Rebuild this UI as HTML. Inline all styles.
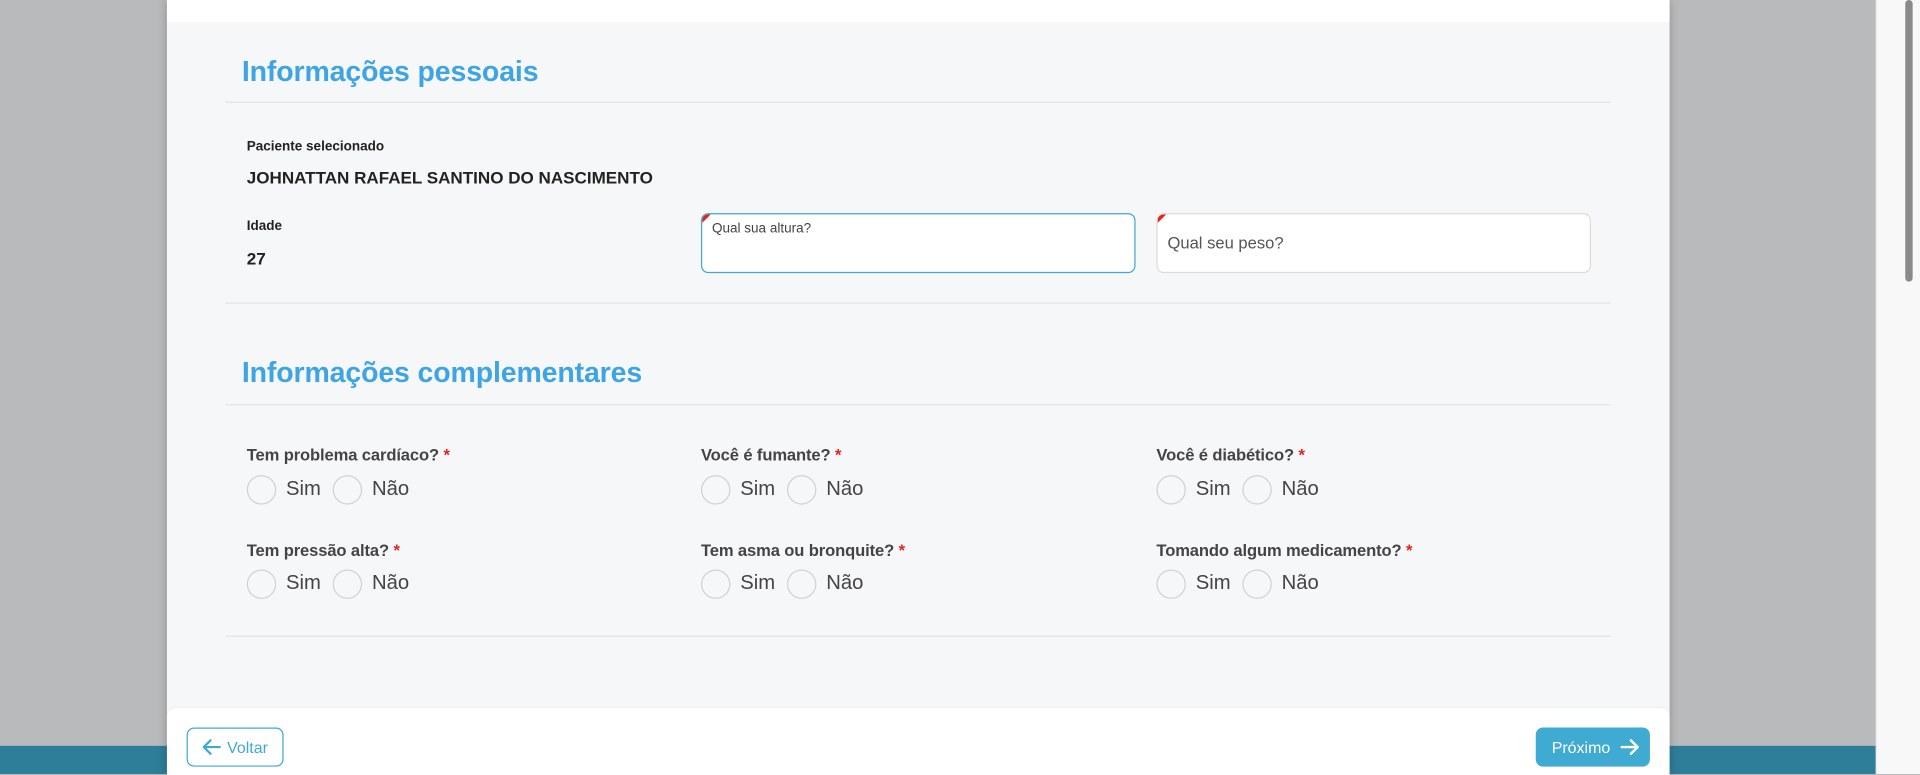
<!DOCTYPE html>
<html><head><meta charset="utf-8"><style>
html,body{margin:0;padding:0;width:1920px;height:774px;overflow:hidden;background:#b9babc;font-family:"Liberation Sans",sans-serif}
#w{position:absolute;left:0;top:0;width:1564px;height:632px;transform:scale(1.22762,1.2247);transform-origin:0 0}
.a{position:absolute}
.teal{left:0;top:609px;width:1528px;height:23px;background:#2e7d99}
.sb{left:1528px;top:0;width:36px;height:632px;background:#f8f8f8;border-left:1px solid #ececec}
.th{left:1552px;top:0;width:6px;height:230px;background:#8a8a8a;border-radius:3px}
.modal{left:136px;top:0;width:1224px;height:632px;background:#f6f7f9;box-shadow:0 0 8px rgba(0,0,0,.25)}
.top{left:136px;top:0;width:1224px;height:18px;background:#fff}
.foot{left:136px;top:577px;width:1224px;height:55px;background:#fff;border-radius:8px 8px 0 0;border-top:1px solid #eceef0}
.h{color:#3fa4e4;font-weight:bold;font-size:23.2px;letter-spacing:-.1px}
.hr{left:184px;width:1128px;height:1px;background:#e1e3e6}
.sm{font-size:11px;font-weight:bold;color:#222}
.big{font-size:13.9px;font-weight:bold;color:#222}
.inp{width:352px;height:47px;background:#fff;border-radius:6px;overflow:hidden}
.inp:before{content:"";position:absolute;left:0;top:0;border-top:7px solid #e8221b;border-right:7px solid transparent}
.q{font-size:13.5px;color:#444;font-weight:bold;letter-spacing:-.1px}
.q b{color:#e8221b}
.r{width:22px;height:22px;border:1px solid #d2d2d2;border-radius:50%;background:#f6f7f9}
.t{font-size:16.5px;color:#444}
</style></head><body><div id="w">
<div class="a teal"></div>
<div class="a sb"></div><div class="a th"></div>
<div class="a modal"></div>
<div class="a top"></div>
<div class="a h" style="left:197px;top:45px">Informações pessoais</div>
<div class="a hr" style="top:83px"></div>
<div class="a sm" style="left:201px;top:114px">Paciente selecionado</div>
<div class="a big" style="left:201px;top:137px">JOHNATTAN RAFAEL SANTINO DO NASCIMENTO</div>
<div class="a sm" style="left:201px;top:179px">Idade</div>
<div class="a big" style="left:201px;top:203px">27</div>
<div class="a inp" style="left:571px;top:174px;border:1px solid #3fa9d3"><span class="a" style="left:8px;top:6px;font-size:11px;color:#444">Qual sua altura?</span></div>
<div class="a inp" style="left:942px;top:174px;border:1px solid #dcdcdc"><span class="a" style="left:8px;top:16px;font-size:13.5px;color:#555">Qual seu peso?</span></div>
<div class="a hr" style="top:247px"></div>
<div class="a h" style="left:197px;top:291px">Informações complementares</div>
<div class="a hr" style="top:330px"></div>

<div class="a q" style="left:201px;top:364px">Tem problema cardíaco? <b>*</b></div>
<div class="a q" style="left:571px;top:364px">Você é fumante? <b>*</b></div>
<div class="a q" style="left:942px;top:364px">Você é diabético? <b>*</b></div>
<div class="a q" style="left:201px;top:442px">Tem pressão alta? <b>*</b></div>
<div class="a q" style="left:571px;top:442px">Tem asma ou bronquite? <b>*</b></div>
<div class="a q" style="left:942px;top:442px">Tomando algum medicamento? <b>*</b></div>

<div class="a r" style="left:201px;top:388px"></div><div class="a t" style="left:233px;top:390px">Sim</div><div class="a r" style="left:271px;top:388px"></div><div class="a t" style="left:303px;top:390px">Não</div>
<div class="a r" style="left:571px;top:388px"></div><div class="a t" style="left:603px;top:390px">Sim</div><div class="a r" style="left:641px;top:388px"></div><div class="a t" style="left:673px;top:390px">Não</div>
<div class="a r" style="left:942px;top:388px"></div><div class="a t" style="left:974px;top:390px">Sim</div><div class="a r" style="left:1012px;top:388px"></div><div class="a t" style="left:1044px;top:390px">Não</div>
<div class="a r" style="left:201px;top:465px"></div><div class="a t" style="left:233px;top:467px">Sim</div><div class="a r" style="left:271px;top:465px"></div><div class="a t" style="left:303px;top:467px">Não</div>
<div class="a r" style="left:571px;top:465px"></div><div class="a t" style="left:603px;top:467px">Sim</div><div class="a r" style="left:641px;top:465px"></div><div class="a t" style="left:673px;top:467px">Não</div>
<div class="a r" style="left:942px;top:465px"></div><div class="a t" style="left:974px;top:467px">Sim</div><div class="a r" style="left:1012px;top:465px"></div><div class="a t" style="left:1044px;top:467px">Não</div>

<div class="a hr" style="top:519px"></div>
<div class="a foot"></div>
<div class="a" style="left:152px;top:594px;width:77px;height:30px;border:1px solid #3fa9d3;border-radius:6px;background:#fff;color:#3fa9d3;font-size:13px">
<svg class="a" style="left:11px;top:8px" width="16" height="14" viewBox="0 0 16 14"><path d="M15 7H2M7.5 1.5L2 7l5.5 5.5" fill="none" stroke="#3fa9d3" stroke-width="1.8" stroke-linecap="round" stroke-linejoin="round"/></svg>
<span class="a" style="left:32px;top:8px">Voltar</span></div>
<div class="a" style="left:1251px;top:594px;width:93px;height:32px;background:#3faad2;border-radius:6px;color:#fff;font-size:13px">
<span class="a" style="left:13px;top:9px">Próximo</span>
<svg class="a" style="left:69px;top:9px" width="16" height="14" viewBox="0 0 16 14"><path d="M1 7h13M8.5 1.5L14 7l-5.5 5.5" fill="none" stroke="#fff" stroke-width="2" stroke-linecap="round" stroke-linejoin="round"/></svg>
</div>
</div></body></html>
